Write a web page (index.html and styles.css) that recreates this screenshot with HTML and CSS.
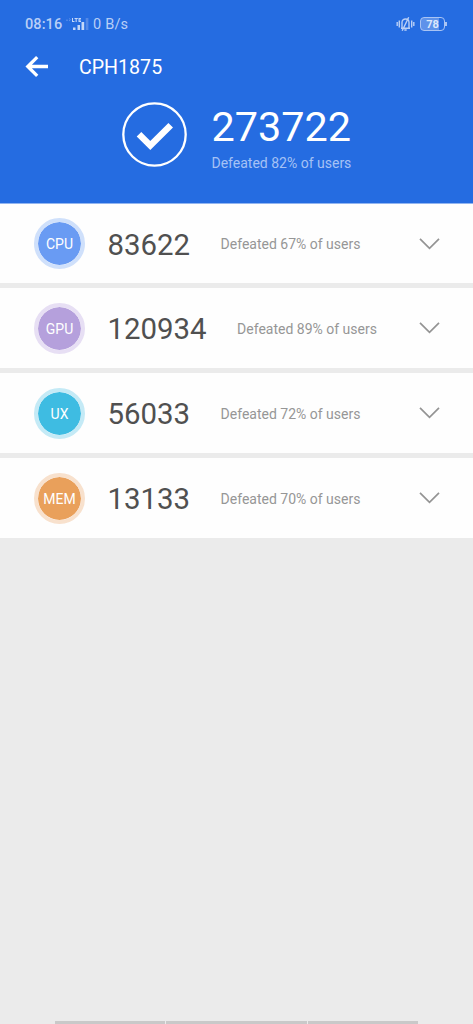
FILE: index.html
```html
<!DOCTYPE html>
<html lang="en">
<head>
<meta charset="utf-8">
<title>CPH1875</title>
<link rel="stylesheet" href="styles.css">
</head>
<body>
<header class="header">
  <div class="status">
    <span class="clock">08:16</span>
    <svg class="signal" width="25" height="14" viewBox="0 0 25 14" fill="#c4d7f8">
      <path d="M1 3.200h2M4 1.500l1.500 1.200L4 4" fill="none" stroke="#5f92ea" stroke-width="1"/>
      <path d="M7 1h1v3h1.500v1H7zM9.500 1h3.300v1h-1.100v3h-1.100V2H9.500zM13.500 1H16v.9h-1.400v.7H16v.8h-1.400v.7H16V5h-2.500z"/>
      <rect x="8" y="10.500" width="2.500" height="2.500"/>
      <rect x="12.500" y="8" width="2.500" height="5"/>
      <rect x="16.500" y="5" width="2.700" height="8"/>
      <rect x="20.700" y="1" width="2.700" height="12" fill="#5489e7"/>
    </svg>
    <span class="speed">0 B/s</span>
    <svg class="vibrate" width="19" height="16" viewBox="0 0 19 16" fill="none" stroke="#b9cff6" stroke-width="1.400">
      <path d="M1.200 6v4M3.300 4.500v7M15.700 4.500v7M17.800 6v4"/>
      <path d="M5 12.200h9M6 12V6.500C6 1.800 13 1.800 13 6.500V12M8.300 14h2.400M6.200 14.800L12.700 1.200"/>
    </svg>
    <span class="battery">78</span>
  </div>
  <div class="bar">
    <svg class="back" width="24" height="24" viewBox="0 0 24 24" fill="none" stroke="#fff" stroke-width="3.300"><path d="M13.200 2.200L3.800 11.500l9.400 9.300M4 11.500h20"/></svg>
    <h1 class="title">CPH1875</h1>
  </div>
  <div class="total">
    <svg class="check" width="66" height="66" viewBox="0 0 66 66" fill="none" stroke="#fff"><circle cx="32.500" cy="33.500" r="31.200" stroke-width="2.300"/><path d="M17 33.300l11.300 11.200L48.700 24.200" stroke-width="6.500"/></svg>
    <div>
      <div class="total-score">273722</div>
      <div class="total-note">Defeated 82% of users</div>
    </div>
  </div>
</header>
<main class="rows">
  <section class="row"><span class="badge cpu">CPU</span><span class="score">83622</span><span class="note">Defeated 67% of users</span><svg class="chevron" width="22" height="14" viewBox="0 0 22 14"><path d="M2 1.800L11.500 11.300l9.500-9.500"/></svg></section>
  <section class="row"><span class="badge gpu">GPU</span><span class="score">120934</span><span class="note">Defeated 89% of users</span><svg class="chevron" width="22" height="14" viewBox="0 0 22 14"><path d="M2 1.800L11.500 11.300l9.500-9.500"/></svg></section>
  <section class="row"><span class="badge ux">UX</span><span class="score">56033</span><span class="note">Defeated 72% of users</span><svg class="chevron" width="22" height="14" viewBox="0 0 22 14"><path d="M2 1.800L11.500 11.300l9.500-9.500"/></svg></section>
  <section class="row"><span class="badge mem">MEM</span><span class="score">13133</span><span class="note">Defeated 70% of users</span><svg class="chevron" width="22" height="14" viewBox="0 0 22 14"><path d="M2 1.800L11.500 11.300l9.500-9.500"/></svg></section>
</main>
<footer class="nav"><i></i><i></i><i></i></footer>
</body>
</html>
```
FILE: styles.css
```css
* { box-sizing: border-box; }
body {
  margin: 0;
  height: 1024px;
  display: flex;
  flex-direction: column;
  overflow: hidden;
  background: #ebebeb;
  font-family: Roboto, sans-serif;
}
.header {
  height: 204px;
  background: #256ce1;
  border-bottom: 1px solid #92b5f0;
  color: #fff;
}
.status {
  height: 48px;
  padding: 0 28px 0 25px;
  display: flex;
  align-items: center;
  color: #b9cff6;
  line-height: 18px;
}
.clock { width: 40px; padding-top: 2px; font-weight: 500; font-size: 14.5px; letter-spacing: 0.1px; }
.signal { margin-top: -1px; }
.speed { margin-left: 3px; padding-top: 1px; font-size: 14.5px; letter-spacing: 0.2px; }
.vibrate { margin-left: auto; }
.battery {
  position: relative;
  width: 25px;
  height: 14px;
  margin-left: 5px;
  border: 1px solid #a9c4f4;
  border-radius: 4px;
  background: linear-gradient(90deg, #5e92ea 78%, transparent 78%);
  font-size: 11px;
  font-weight: 700;
  line-height: 13px;
  text-align: center;
  color: #dce8fc;
}
.battery::after {
  content: "";
  position: absolute;
  right: -3px;
  top: 4px;
  width: 2px;
  height: 4px;
  background: #a9c4f4;
}
.bar {
  height: 38px;
  padding-left: 24px;
  display: flex;
  align-items: center;
}
.title { margin: 0 0 0 31px; padding-top: 1px; font-size: 19.6px; line-height: 24px; font-weight: 400; }
.total { display: flex; padding: 15px 0 0 122px; }
.total > div { margin-left: 23.5px; }
.total-score { height: 49px; padding-top: 1px; font-size: 41.4px; line-height: 51px; }
.total-note { margin-top: 5px; font-size: 14px; line-height: 16px; color: #a5c2f5; }
.rows { display: flex; flex-direction: column; gap: 5px; }
.row {
  height: 80px;
  padding: 0 33px 0 34px;
  display: flex;
  align-items: center;
  background: #fefefe;
}
.row:first-child { height: 79px; }
.badge {
  width: 51px;
  height: 51px;
  border: 4px solid;
  border-radius: 50%;
  background-clip: padding-box;
  line-height: 44px;
  text-align: center;
  font-size: 14px;
  color: #fff;
}
.cpu { background-color: #699bf3; border-color: #cfe0fb; }
.gpu { background-color: #b5a0dc; border-color: #e7dff4; }
.ux { background-color: #3ebce2; border-color: #c4eaf6; }
.mem { background-color: #e9a05b; border-color: #f8e1cd; }
.score { margin-left: 22.5px; padding-top: 2px; font-size: 29.4px; color: #505050; }
.note { margin-left: 30.5px; padding-top: 1px; font-size: 14px; color: #969696; }
.row:first-child .note { padding-top: 0; }
.chevron { margin-left: auto; fill: none; stroke: #949494; stroke-width: 1.7; }
.nav { display: flex; gap: 1px; width: 363px; height: 3px; margin: auto auto 0 55px; }
.nav i { flex: 110; background: #c9c9c9; }
.nav i:nth-child(2) { flex: 140; }
```
